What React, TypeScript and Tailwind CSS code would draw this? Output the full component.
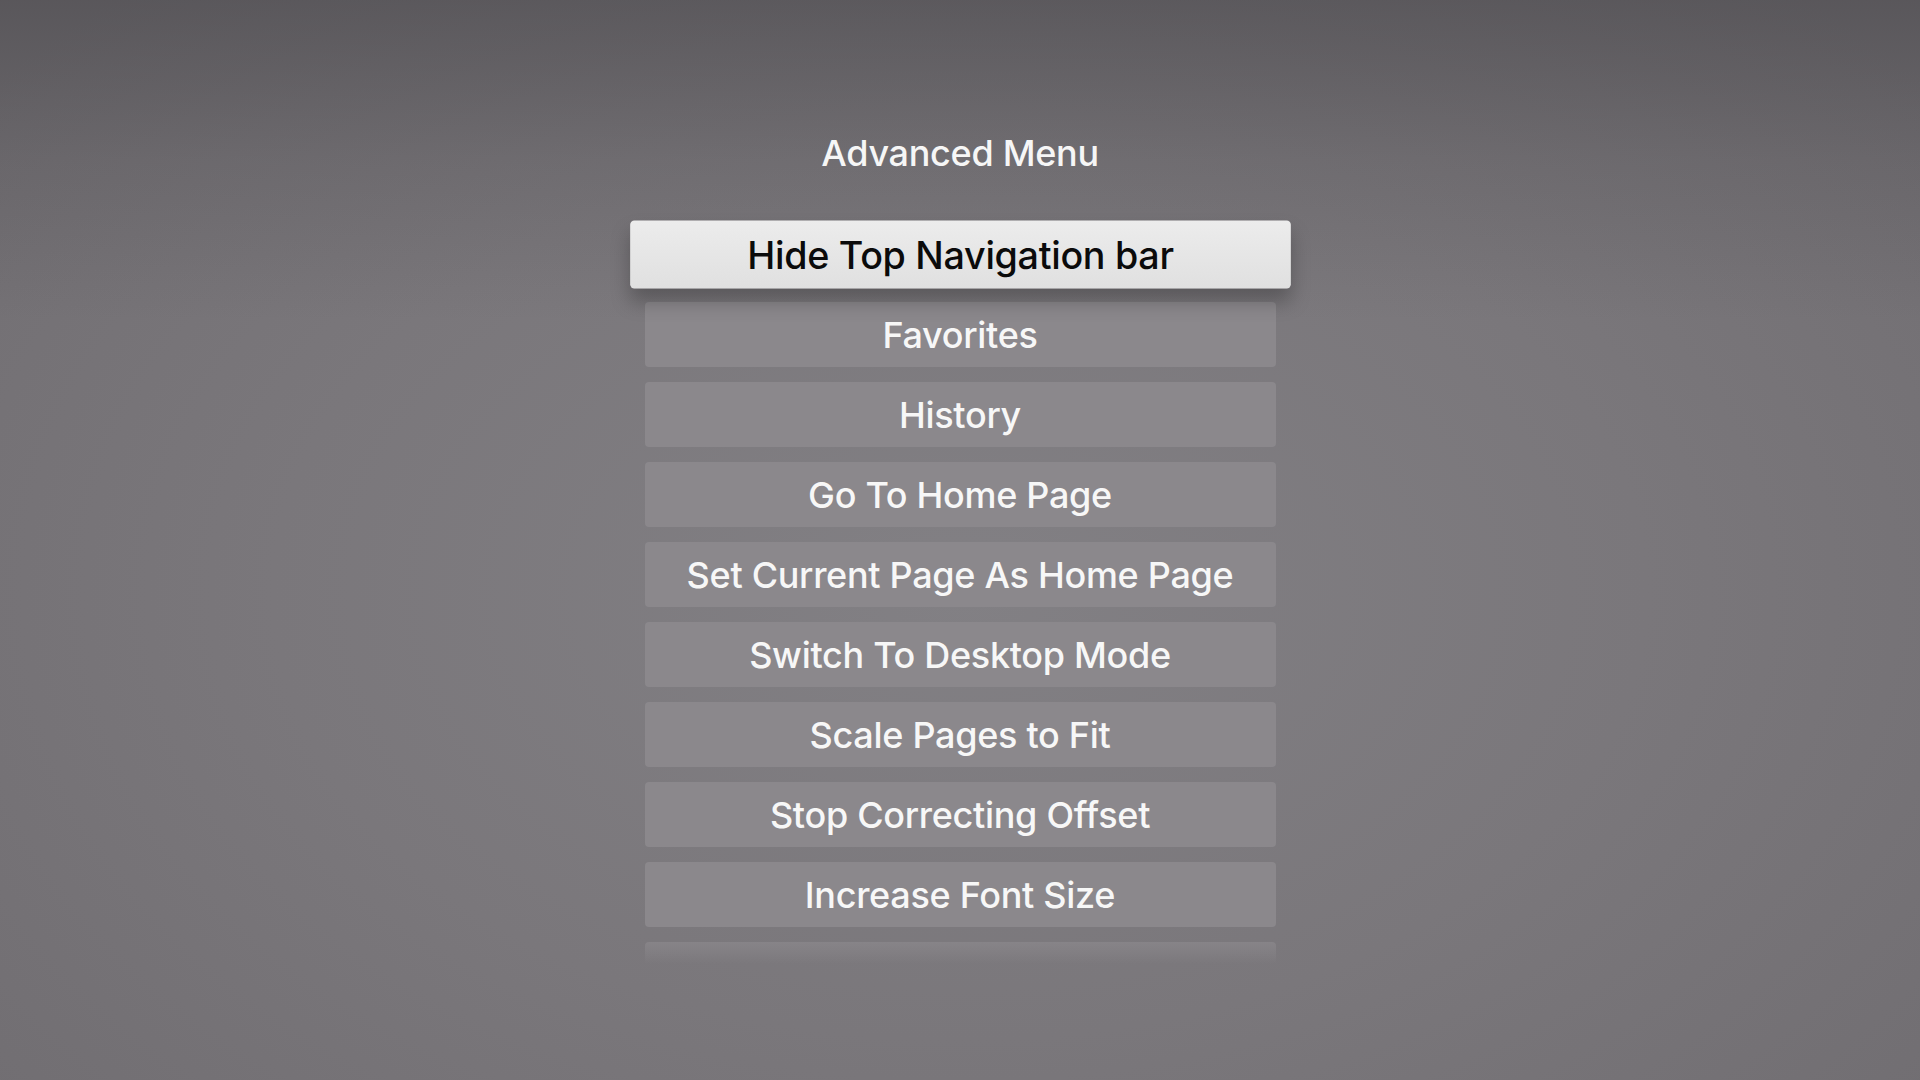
const items = [
  "Hide Top Navigation bar",
  "Favorites",
  "History",
  "Go To Home Page",
  "Set Current Page As Home Page",
  "Switch To Desktop Mode",
  "Scale Pages to Fit",
  "Stop Correcting Offset",
  "Increase Font Size",
];

export default function App() {
  const focused = 0;

  return (
    <div className="w-full h-[1080px] overflow-hidden bg-[linear-gradient(to_bottom,rgba(70,68,72,0.55)_0px,rgba(70,68,72,0.2)_160px,rgba(70,68,72,0)_320px),radial-gradient(ellipse_65%_75%_at_50%_55%,#828084_0%,#7a777b_55%,#716e72_100%)] font-['Inter','Noto_Sans',sans-serif]">
      <div className="flex flex-col items-center pt-[131px]">
        {/* ===== TITLE ===== */}
        <h1 className="text-[36px] leading-[44px] font-medium text-[#f6f6f6] tracking-[-0.3px]">
          Advanced Menu
        </h1>

        {/* ===== MENU ===== */}
        <div className="mt-[47px] w-[760px] flex flex-col items-center gap-[15px]">
          {items.map((label, i) =>
            i === focused ? (
              <button
                key={label}
                className="w-[631px] h-[65px] shrink-0 rounded-[4px] scale-[1.047] bg-[linear-gradient(to_bottom,#ececec,#e0e0e0)] text-[#0b0b0b] text-[36px] font-medium shadow-[0_12px_18px_rgba(0,0,0,0.25)] tracking-[-0.3px] relative z-10"
              >
                {label}
              </button>
            ) : (
              <button
                key={label}
                className="w-[631px] h-[65px] shrink-0 rounded-[4px] bg-[#8b888c] text-[#f7f7f7] text-[36px] font-medium tracking-[-0.3px]"
              >
                {label}
              </button>
            )
          )}
          {/* next item, faded out at the list's edge */}
          <div className="w-[631px] h-[22px] shrink-0 rounded-t-[4px] bg-[linear-gradient(to_bottom,rgba(139,136,140,0.75),rgba(139,136,140,0))]" />
        </div>
      </div>
    </div>
  );
}
